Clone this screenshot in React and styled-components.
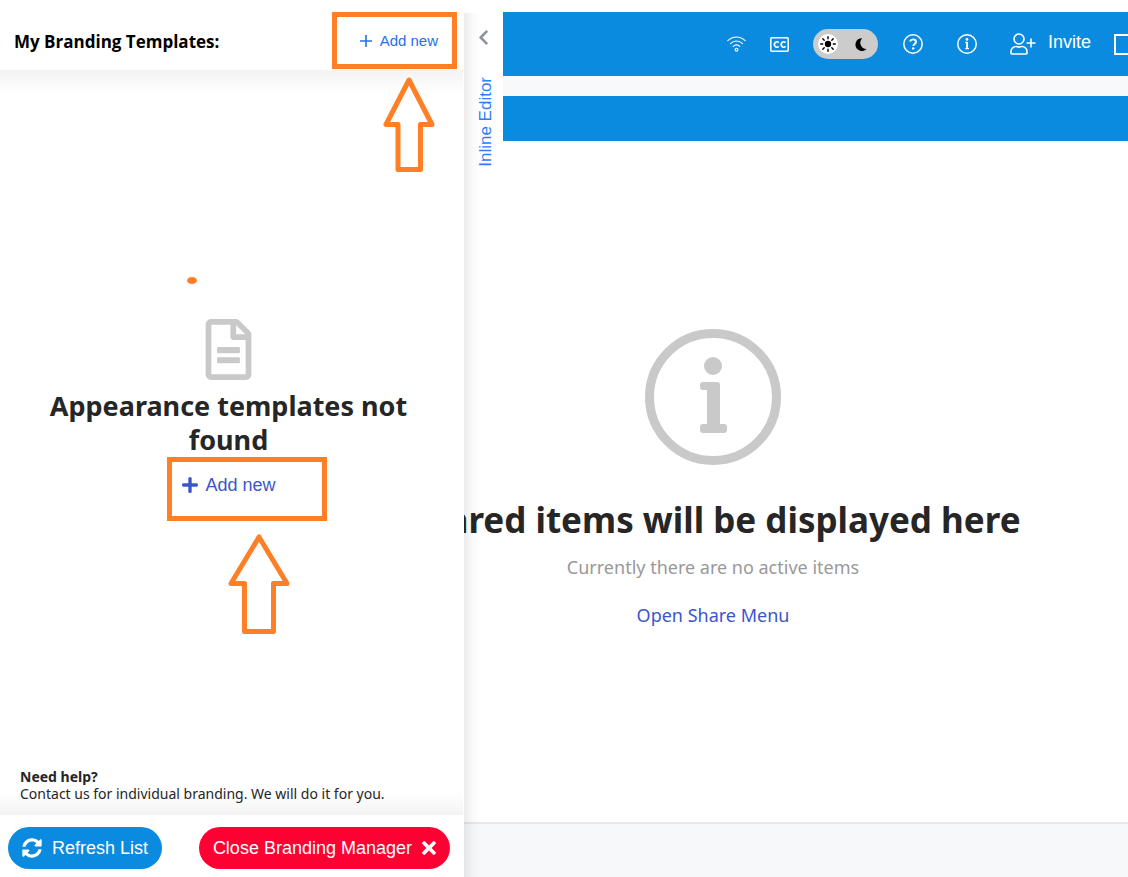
import React, { useState } from 'react';
import styled, { createGlobalStyle } from 'styled-components';
import { FaRegFileAlt, FaSyncAlt, FaTimes, FaPlus, FaChevronLeft } from 'react-icons/fa';

const GlobalStyle = createGlobalStyle`
  * {
    box-sizing: border-box;
  }

  body {
    margin: 0;
    background: #fff;
    color: #262626;
    font-family: 'Noto Sans', 'Open Sans', sans-serif;
  }

  button {
    padding: 0;
    border: none;
    background: none;
    font-family: 'Liberation Sans', Arial, sans-serif;
    cursor: pointer;
  }
`;

const Page = styled.div`
  position: relative;
  display: flex;
  min-height: 100vh;
  overflow: hidden;
`;

const Overlay = styled.div`
  position: absolute;
  top: 0;
  bottom: 0;
  left: 0;
  z-index: 1;
  display: flex;
  align-items: flex-start;
`;

const Drawer = styled.aside`
  display: flex;
  flex-direction: column;
  align-self: stretch;
  width: 464px;
  background: #fff;
`;

const DrawerHeader = styled.header`
  display: flex;
  align-items: center;
  justify-content: space-between;
  height: 70px;
  padding: 12px 26px 0 14px;
`;

const DrawerTitle = styled.h1`
  margin: 0;
  color: #000;
  font-family: 'Open Sans', sans-serif;
  font-size: 17px;
  font-weight: 700;
`;

const AddButton = styled.button`
  display: flex;
  align-items: center;
  gap: ${(props) => (props.$large ? '6px' : '8px')};
  color: ${(props) => (props.$large ? '#3c55cc' : '#2a70e6')};
  font-size: ${(props) => (props.$large ? '18px' : '15px')};
  line-height: 24px;
`;

const DrawerBody = styled.div`
  flex: 1;
  display: flex;
  flex-direction: column;
  justify-content: space-between;
  padding: 249px 20px 13px;
  margin-right: 1px;
  background:
    linear-gradient(#f3f3f3, #fff) top / 100% 24px no-repeat,
    linear-gradient(#fff, #f3f3f3) bottom / 100% 24px no-repeat,
    #fff;
`;

const EmptyTemplates = styled.section`
  display: flex;
  flex-direction: column;
  align-items: center;
  padding: 0 24px 0 18px;
  color: #c9c9c9;
`;

const EmptyHeading = styled.h2`
  margin: 9px 0 16px;
  color: #262626;
  font-size: 27px;
  line-height: 34px;
  text-align: center;
`;

const Help = styled.p`
  margin: 0;
  font-size: 14px;
  line-height: 17px;
`;

const DrawerFooter = styled.footer`
  display: flex;
  align-items: center;
  justify-content: space-between;
  height: 62px;
  padding: 4px 14px 0 8px;
`;

const PillButton = styled.button`
  display: flex;
  align-items: center;
  gap: 10px;
  height: 42px;
  padding: 0 14px;
  border-radius: 21px;
  background: ${(props) => props.$color};
  color: #fff;
  font-size: 18px;
`;

const CloseIcon = styled(FaTimes)`
  width: 14px;
  height: 20px;
`;

const EditorTab = styled.button`
  display: flex;
  flex-direction: column;
  align-items: center;
  width: 39px;
  height: 176px;
  margin-top: 12px;
  padding: 17px 0 0;
  gap: 31px;
  background: #fff;
  color: #2f7cf6;
  font-size: 17px;
  z-index: 1;

  svg {
    color: #8d939b;
  }
`;

const VerticalText = styled.span`
  writing-mode: vertical-rl;
  transform: rotate(180deg);
  padding-right: 4px;
`;

const DrawerShadow = styled.div`
  position: absolute;
  top: 13px;
  bottom: 0;
  left: 464px;
  z-index: 2;
  width: 18px;
  background: linear-gradient(to right, rgba(0, 0, 0, 0.08), rgba(0, 0, 0, 0.02) 50%, transparent);
  pointer-events: none;
`;

const Workspace = styled.div`
  flex: 1;
  display: flex;
  flex-direction: column;
  min-width: 0;
  margin-left: 298px;
  padding-top: 12px;
`;

const TopBar = styled.header`
  display: flex;
  align-items: center;
  justify-content: flex-end;
  height: 64px;
  padding-right: 14px;
  background: #0b8bdf;
  color: #fff;
`;

const IconButton = styled.button`
  display: flex;
  margin-right: ${(props) => props.$gap || 33}px;
  color: #fff;
`;

const InviteButton = styled.button`
  display: flex;
  align-items: center;
  gap: 12px;
  margin-right: 23px;
  color: #fff;
  font-size: 18px;

  span {
    padding-bottom: 3px;
  }
`;

const ThemeSwitch = styled.label`
  display: grid;
  grid-template-columns: 30px 35px;
  place-items: center;
  height: 30px;
  margin-right: 25px;
  border-radius: 15px;
  background: #ccc;
  cursor: pointer;

  svg {
    grid-row: 1;
    z-index: 1;
    pointer-events: none;
  }

  svg:first-of-type {
    grid-column: 1;
  }

  svg:last-of-type {
    grid-column: 2;
  }
`;

const ThemeInput = styled.input`
  appearance: none;
  grid-row: 1;
  grid-column: ${(props) => (props.checked ? 2 : 1)};
  width: 20px;
  height: 20px;
  margin: 0;
  border-radius: 50%;
  background: #fff;
`;

const Clipped = styled.div`
  width: 0;

  svg {
    display: block;
  }
`;

const Gap = styled.div`
  height: 20px;
  background: #f8f9fb;
`;

const SubBar = styled.div`
  height: 45px;
  background: #0b8bdf;
`;

const Stage = styled.main`
  flex: 1;
  display: flex;
  flex-direction: column;
  align-items: center;
  justify-content: center;
  padding-bottom: 5px;
  color: #c9c9c9;
`;

const StageHeading = styled.h2`
  margin: 29px 0 7px;
  color: #262626;
  font-size: 35px;
  line-height: 52px;
  white-space: nowrap;
`;

const StageText = styled.p`
  margin: 0 0 20px;
  color: #999;
  font-size: 18px;
  line-height: 28px;
`;

const ShareLink = styled.a`
  color: #3c55cc;
  font-size: 18px;
  line-height: 28px;
  text-decoration: none;
`;

const BottomBar = styled.div`
  height: 55px;
  border-top: 2px solid #e6e7e9;
  background: #f7f8fa;
`;

const Annotations = styled.svg`
  position: absolute;
  top: 0;
  left: 0;
  z-index: 3;
  pointer-events: none;
`;

const InfoIcon = ({ size, ring }) => (
  <svg width={size} height={size} viewBox="0 0 136 136" fill="currentColor" aria-hidden="true">
    <circle cx="68" cy="68" r={68 - ring / 2} fill="none" stroke="currentColor" strokeWidth={ring} />
    <circle cx="68" cy="37" r="9" />
    <path d="M58 53h14a3 3 0 0 1 3 3v39h4a3 3 0 0 1 3 3v3a3 3 0 0 1-3 3H58a3 3 0 0 1-3-3v-3a3 3 0 0 1 3-3h4V61h-4a3 3 0 0 1-3-3v-2a3 3 0 0 1 3-3z" />
  </svg>
);

const HelpIcon = () => (
  <svg width="20" height="20" viewBox="0 0 20 20" fill="none" stroke="currentColor" aria-hidden="true">
    <circle cx="10" cy="10" r="9.2" strokeWidth="1.5" />
    <path d="M6.9 7.5C7.5 6.1 8.6 5.4 10 5.4c1.7 0 3 1 3 2.5 0 2-2.7 2.2-2.7 4.1" strokeWidth="1.9" />
    <circle cx="10.2" cy="14.4" r="1.2" fill="currentColor" stroke="none" />
  </svg>
);

const CaptionsIcon = () => (
  <svg width="19" height="15" viewBox="0 0 19 15" fill="none" stroke="currentColor" aria-hidden="true">
    <rect x=".8" y=".8" width="17.4" height="13.4" rx="1" strokeWidth="1.5" />
    <path d="M8.8 5.600a2.600 2.600 0 1 0 0 3.800M15.600 5.600a2.600 2.600 0 1 0 0 3.800" strokeWidth="1.6" />
  </svg>
);

const WifiIcon = () => (
  <svg width="19" height="16" viewBox="0 0 19 16" fill="none" stroke="currentColor" strokeWidth="1.1" strokeLinecap="round" aria-hidden="true">
    <path d="M.8 4.6C5.8-.3 13.2-.3 18.2 4.6M3.5 7.6c3.5-3.4 8.5-3.4 12 0M6.2 10.4c2-1.9 4.6-1.9 6.6 0" />
    <circle cx="9.5" cy="13.7" r="1.4" />
  </svg>
);

const SunIcon = () => (
  <svg width="16" height="16" viewBox="0 0 16 16" aria-hidden="true">
    <circle cx="8" cy="8" r="3.2" />
    <path
      d="M8 .7v2M8 13.3v2M.7 8h2M13.3 8h2M2.8 2.8l1.4 1.4M11.8 11.8l1.4 1.4M2.8 13.2l1.4-1.4M11.8 4.2l1.4-1.4"
      stroke="#000"
      strokeWidth="1.4"
      strokeLinecap="round"
    />
  </svg>
);

const MoonIcon = () => (
  <svg width="13" height="13" viewBox="0 0 13 13" aria-hidden="true">
    <path d="M8.2.2A6.4 6.4 0 1 0 12.5 11 6.3 6.3 0 0 1 8.2.2z" fill="#000" />
  </svg>
);

const InviteIcon = () => (
  <svg width="26" height="22" viewBox="0 0 26 22" fill="none" stroke="currentColor" strokeWidth="1.6" aria-hidden="true">
    <circle cx="9" cy="6" r="5" />
    <path d="M1 20v-1.5a5 5 0 0 1 5-5c1.2 0 1.7.6 3 .6s1.8-.6 3-.6a5 5 0 0 1 5 5V20a1 1 0 0 1-1 1H2a1 1 0 0 1-1-1zM21 5.5v9M16.5 10h9" />
  </svg>
);

const Marks = () => (
  <Annotations width="464" height="640" fill="none" stroke="#ff7f27" strokeWidth="5" strokeLinejoin="round" aria-hidden="true">
    <g strokeLinejoin="miter">
      <rect x="334.5" y="14.5" width="120" height="52" />
      <rect x="169.5" y="459.5" width="155" height="59" />
    </g>
    <path d="M409 80L386 124.5h12v45h22.5v-45H432z" />
    <path d="M259 537L231 583.5h13.5v48h29v-48H287z" />
    <ellipse cx="192" cy="280.5" rx="5" ry="3.5" fill="#ff7f27" stroke="none" />
  </Annotations>
);

const App = () => {
  const [dark, setDark] = useState(false);

  return (
    <Page>
      <GlobalStyle />
      <Overlay>
        <Drawer>
          <DrawerHeader>
            <DrawerTitle>My Branding Templates:</DrawerTitle>
            <AddButton>
              <svg width="12" height="12" viewBox="0 0 12 12" stroke="currentColor" strokeWidth="1.6">
                <path d="M6 0v12M0 6h12" />
              </svg>
              Add new
            </AddButton>
          </DrawerHeader>
          <DrawerBody>
            <EmptyTemplates>
              <FaRegFileAlt size={61} />
              <EmptyHeading>Appearance templates not found</EmptyHeading>
              <AddButton $large>
                <FaPlus size={18} />
                Add new
              </AddButton>
            </EmptyTemplates>
            <Help>
              <strong>Need help?</strong>
              <br />
              Contact us for individual branding. We will do it for you.
            </Help>
          </DrawerBody>
          <DrawerFooter>
            <PillButton $color="#0b8bdf">
              <FaSyncAlt size={20} />
              Refresh List
            </PillButton>
            <PillButton $color="#ff0033">
              Close Branding Manager
              <CloseIcon />
            </PillButton>
          </DrawerFooter>
        </Drawer>
        <EditorTab>
          <FaChevronLeft size={17} />
          <VerticalText>Inline Editor</VerticalText>
        </EditorTab>
        <DrawerShadow />
      </Overlay>
      <Workspace>
        <TopBar>
          <IconButton $gap={24} aria-label="Connection"><WifiIcon /></IconButton>
          <IconButton $gap={24} aria-label="Captions"><CaptionsIcon /></IconButton>
          <ThemeSwitch aria-label="Dark theme">
            <ThemeInput type="checkbox" checked={dark} onChange={(e) => setDark(e.target.checked)} />
            <SunIcon />
            <MoonIcon />
          </ThemeSwitch>
          <IconButton $gap={34} aria-label="Help"><HelpIcon /></IconButton>
          <IconButton aria-label="Information"><InfoIcon size={20} ring={10} /></IconButton>
          <InviteButton>
            <InviteIcon />
            <span>Invite</span>
          </InviteButton>
          <Clipped>
            <svg width="22" height="21" viewBox="0 0 22 21" fill="none" stroke="#fff" strokeWidth="2">
              <rect x="1" y="1" width="20" height="19" />
            </svg>
          </Clipped>
        </TopBar>
        <Gap />
        <SubBar />
        <Stage>
          <InfoIcon size={136} ring={9} />
          <StageHeading>Shared items will be displayed here</StageHeading>
          <StageText>Currently there are no active items</StageText>
          <ShareLink href="#share">Open Share Menu</ShareLink>
        </Stage>
        <BottomBar />
      </Workspace>
      <Marks />
    </Page>
  );
};

export default App;
